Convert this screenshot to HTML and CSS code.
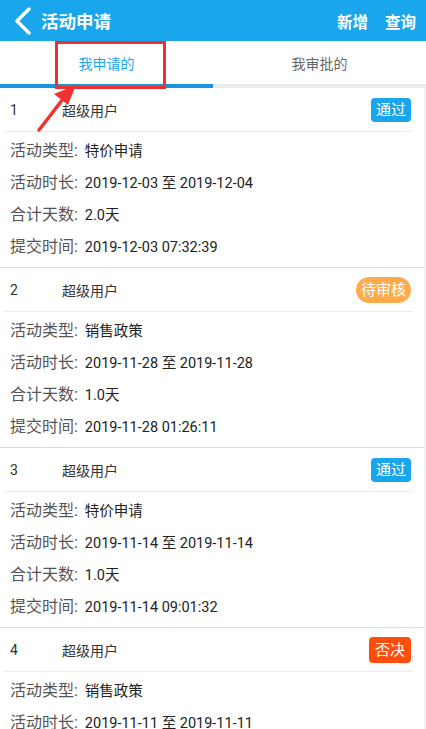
FILE: index.html
```html
<!DOCTYPE html>
<html lang="zh">
<head>
    <meta charset="UTF-8">
    <meta name="viewport" content="width=device-width, initial-scale=1.0">
    <title>活动申请</title>
    <link rel="stylesheet" href="styles.css">
</head>
<body>
    <header class="topbar">
        <div class="topbar-left">
            <svg class="back" width="22" height="28" viewBox="0 0 22 28">
                <path d="M17 2 L5 14 L17 26" fill="none" stroke="#fff" stroke-width="3.4" stroke-linecap="round" stroke-linejoin="round"/>
            </svg>
            <span class="title">活动申请</span>
        </div>
        <div class="topbar-right">
            <span>新增</span>
            <span>查询</span>
        </div>
    </header>

    <nav class="tabs">
        <div class="tab active">我申请的</div>
        <div class="tab">我审批的</div>
    </nav>

    <section class="list">
        <div class="card">
            <div class="card-head">
                <span class="num">1</span>
                <span class="user">超级用户</span>
                <span class="badge pass">通过</span>
            </div>
            <div class="card-body">
                <p><span class="label">活动类型: </span>特价申请</p>
                <p><span class="label">活动时长: </span>2019-12-03 至 2019-12-04</p>
                <p><span class="label">合计天数: </span>2.0天</p>
                <p><span class="label">提交时间: </span>2019-12-03 07:32:39</p>
            </div>
        </div>
        <div class="card">
            <div class="card-head">
                <span class="num">2</span>
                <span class="user">超级用户</span>
                <span class="badge wait">待审核</span>
            </div>
            <div class="card-body">
                <p><span class="label">活动类型: </span>销售政策</p>
                <p><span class="label">活动时长: </span>2019-11-28 至 2019-11-28</p>
                <p><span class="label">合计天数: </span>1.0天</p>
                <p><span class="label">提交时间: </span>2019-11-28 01:26:11</p>
            </div>
        </div>
        <div class="card">
            <div class="card-head">
                <span class="num">3</span>
                <span class="user">超级用户</span>
                <span class="badge pass">通过</span>
            </div>
            <div class="card-body">
                <p><span class="label">活动类型: </span>特价申请</p>
                <p><span class="label">活动时长: </span>2019-11-14 至 2019-11-14</p>
                <p><span class="label">合计天数: </span>1.0天</p>
                <p><span class="label">提交时间: </span>2019-11-14 09:01:32</p>
            </div>
        </div>
        <div class="card">
            <div class="card-head">
                <span class="num">4</span>
                <span class="user">超级用户</span>
                <span class="badge reject">否决</span>
            </div>
            <div class="card-body">
                <p><span class="label">活动类型: </span>销售政策</p>
                <p><span class="label">活动时长: </span>2019-11-11 至 2019-11-11</p>
            </div>
        </div>
    </section>

    <!-- annotation over the tab -->
    <div class="mark-box"></div>
    <svg class="mark-arrow" width="60" height="60" viewBox="0 0 60 60">
        <line x1="4" y1="46" x2="28" y2="15" stroke="#f03232" stroke-width="3.5" stroke-linecap="round"/>
        <polygon points="41,1 19,10 33,21" fill="#f03232"/>
    </svg>
</body>
</html>
```

FILE: styles.css
```css
html, body {
    margin: 0;
    padding: 0;
    font-family: Roboto, "Noto Sans CJK SC", sans-serif;
    background: #fff;
    overflow: hidden;
}

body {
    position: relative;
    width: 426px;
    height: 729px;
}

.topbar {
    height: 41px;
    background: #1aa6ec;
    color: #fff;
    display: flex;
    align-items: center;
    justify-content: space-between;
    padding: 0 10px 0 12px;
}

.topbar-left {
    display: flex;
    align-items: center;
    gap: 7px;
}

.back {
    display: block;
}

.title {
    font-size: 17.5px;
    font-weight: bold;
}

.topbar-right {
    display: flex;
    gap: 17px;
    font-size: 15.5px;
    font-weight: bold;
}

.tabs {
    display: flex;
    height: 47px;
    border-bottom: 4px solid #e8ecee;
    box-sizing: border-box;
}

.tab {
    flex: 1;
    display: flex;
    align-items: center;
    justify-content: center;
    font-size: 14px;
    color: #666;
    margin-bottom: -4px;
    border-bottom: 4px solid transparent;
}

.tab.active {
    color: #1aa6ec;
    border-bottom-color: #1a94de;
}

.list {
    border-right: 2px solid #eef0f1;
}

.card {
    border-bottom: 1px solid #dcdcdc;
}

.card-head {
    height: 43px;
    display: flex;
    align-items: center;
    margin: 0 11px 0 4px;
    padding: 0 2px 0 6px;
    border-bottom: 1px solid #eceeee;
    font-size: 14px;
    color: #333;
}

.num {
    width: 52px;
}

.user {
    flex: 1;
}

.badge {
    color: #fff;
    font-size: 15px;
    height: 24px;
    line-height: 24px;
    padding: 0 5px;
    border-radius: 4px;
}

.badge.pass {
    background: #1aa6ec;
}

.badge.wait {
    background: #ffab4c;
    border-radius: 13px;
    height: 26px;
    line-height: 26px;
}

.badge.reject {
    background: #ff4d0d;
    height: 26px;
    line-height: 26px;
    padding: 0 6px;
}

.card-body {
    padding: 3px 10px 4px;
}

.card-body p {
    margin: 0;
    height: 32px;
    line-height: 32px;
    font-size: 14.5px;
    color: #222;
}

.label {
    font-size: 16px;
    color: #555;
    margin-right: 3px;
}

.mark-box {
    position: absolute;
    left: 55px;
    top: 41px;
    width: 105px;
    height: 42px;
    border: 3px solid #ee2f2f;
}

.mark-arrow {
    position: absolute;
    left: 35px;
    top: 84px;
}
```
